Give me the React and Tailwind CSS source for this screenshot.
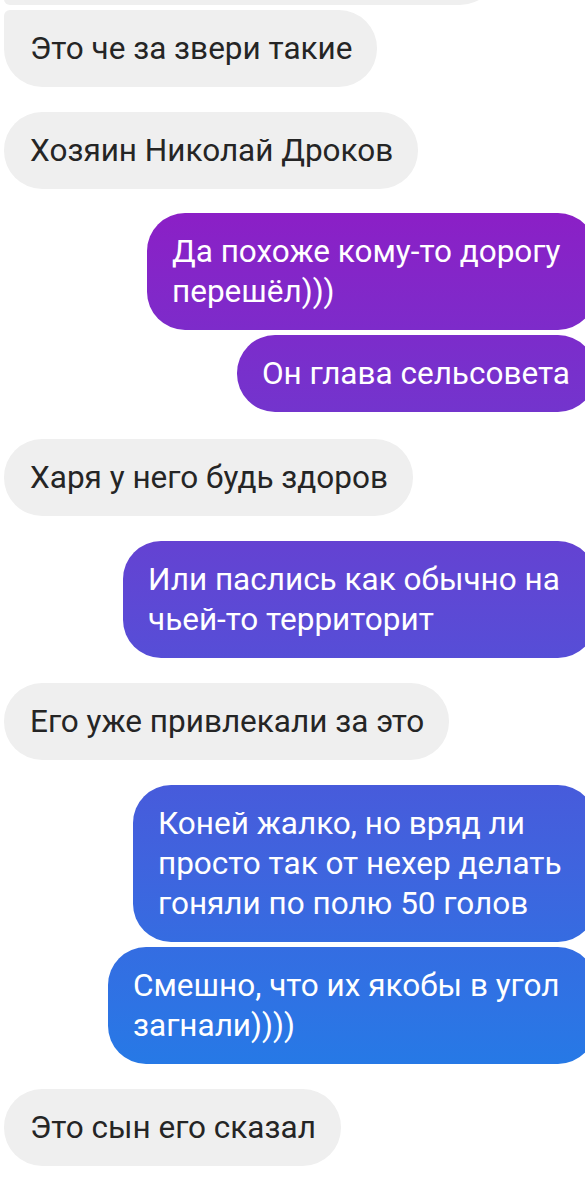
import React from "react";

const font = { fontFamily: "Roboto, 'Noto Sans', sans-serif" };

function Left({ children, className = "" }) {
  return (
    <div
      className={`self-start ml-[4px] bg-[#efefef] text-[#252525] rounded-[38px] pl-[26px] pr-[25px] pt-[19px] pb-[18px] text-[31.5px] leading-[40px] ${className}`}
    >
      {children}
    </div>
  );
}

function Right({ children, className = "" }) {
  return (
    <div
      className={`self-end -mr-[11px] text-white rounded-[38px] pl-[25px] pr-[26px] pt-[19px] pb-[18px] text-[31.5px] leading-[40px] ${className}`}
    >
      {children}
    </div>
  );
}

export default function App() {
  return (
    <div
      className="w-[585px] h-[1199px] overflow-hidden bg-white flex flex-col"
      style={font}
    >
      <div className="self-start ml-[4px] -mt-[72px] h-[77px] w-[494px] bg-[#efefef] rounded-t-[38px] rounded-br-[38px] rounded-bl-[6px]" />
      <Left className="mt-[5px] rounded-tl-[6px]">Это че за звери такие</Left>
      <Left className="mt-[25px]">Хозяин Николай Дроков</Left>
      <Right className="mt-[24px] max-w-[449px] bg-gradient-to-b from-[#8b1fc6] to-[#7d2bca]">
        Да похоже кому-то дорогу перешёл)))
      </Right>
      <Right className="mt-[5px] bg-gradient-to-b from-[#7c2ccb] to-[#7334cd]">
        Он глава сельсовета
      </Right>
      <Left className="mt-[27px]">Харя у него будь здоров</Left>
      <Right className="mt-[25px] max-w-[473px] bg-gradient-to-b from-[#6442d2] to-[#564ed7]">
        Или паслись как обычно на чьей-то территорит
      </Right>
      <Left className="mt-[25px]">Его уже привлекали за это</Left>
      <Right className="mt-[25px] max-w-[463px] bg-gradient-to-b from-[#475bdb] to-[#356ce1]">
        Коней жалко, но вряд ли просто так от нехер делать гоняли по полю 50 голов
      </Right>
      <Right className="mt-[5px] max-w-[488px] bg-gradient-to-b from-[#346de2] to-[#2679e6]">
        Смешно, что их якобы в угол загнали))))
      </Right>
      <Left className="mt-[25px]">Это сын его сказал</Left>
    </div>
  );
}
